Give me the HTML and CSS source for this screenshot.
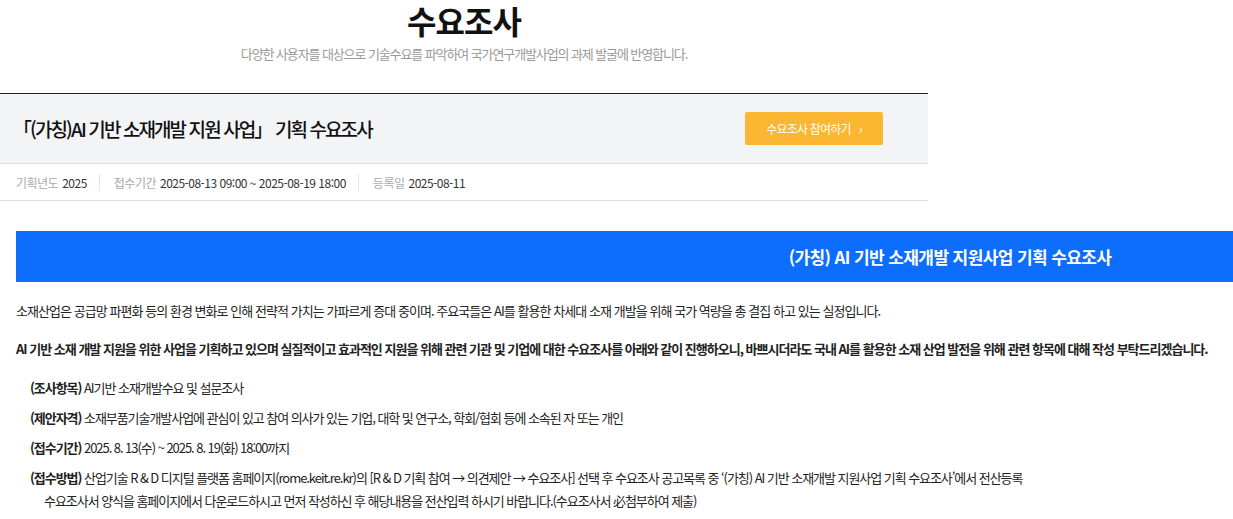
FILE: index.html
```html
<!DOCTYPE html>
<html lang="ko">
<head>
  <meta charset="UTF-8" />
  <title>수요조사</title>
  <link rel="stylesheet" href="styles.css">
</head>
<body>
  <div class="topo">
    <h1 class="titulo">수요조사</h1>
    <p class="subtitulo">다양한 사용자를 대상으로 기술수요를 파악하여 국가연구개발사업의 과제 발굴에 반영합니다.</p>

    <div class="caixa">
      <h2>「(가칭)AI 기반 소재개발 지원 사업」 기획 수요조사</h2>
      <a class="btn-participar" href="#">수요조사 참여하기 <span class="seta">›</span></a>
    </div>

    <div class="meta">
      <div class="meta-item"><span class="rotulo">기획년도</span> 2025</div>
      <div class="meta-item"><span class="rotulo">접수기간</span> 2025-08-13 09:00 ~ 2025-08-19 18:00</div>
      <div class="meta-item"><span class="rotulo">등록일</span> 2025-08-11</div>
    </div>
  </div>

  <div class="conteudo">
    <div class="faixa">(가칭) AI 기반 소재개발 지원사업 기획 수요조사</div>

    <p class="texto">소재산업은 공급망 파편화 등의 환경 변화로 인해 전략적 가치는 가파르게 증대 중이며. 주요국들은 AI를 활용한 차세대 소재 개발을 위해 국가 역량을 총 결집 하고 있는 실정입니다.</p>
    <p class="texto forte">AI 기반 소재 개발 지원을 위한 사업을 기획하고 있으며 실질적이고 효과적인 지원을 위해 관련 기관 및 기업에 대한 수요조사를 아래와 같이 진행하오니, 바쁘시더라도 국내 AI를 활용한 소재 산업 발전을 위해 관련 항목에 대해 작성 부탁드리겠습니다.</p>

    <ul class="itens">
      <li><b>(조사항목)</b> AI기반 소재개발수요 및 설문조사</li>
      <li><b>(제안자격)</b> 소재부품기술개발사업에 관심이 있고 참여 의사가 있는 기업, 대학 및 연구소, 학회/협회 등에 소속된 자 또는 개인</li>
      <li><b>(접수기간)</b> 2025. 8. 13(수) ~ 2025. 8. 19(화) 18:00까지</li>
      <li><b>(접수방법)</b> 산업기술 R &amp; D 디지털 플랫폼 홈페이지(rome.keit.re.kr)의 [R &amp; D 기획 참여 → 의견제안 → 수요조사] 선택 후 수요조사 공고목록 중 ‘(가칭) AI 기반 소재개발 지원사업 기획 수요조사’에서 전산등록
        <span class="continua">수요조사서 양식을 홈페이지에서 다운로드하시고 먼저 작성하신 후 해당내용을 전산입력 하시기 바랍니다.(수요조사서 必첨부하여 제출)</span>
      </li>
    </ul>
  </div>
</body>
</html>
```

FILE: styles.css
```css
* {
  box-sizing: border-box;
}
html, body {
  overflow: hidden;
}
body {
  margin: 0;
  font-family: 'Noto Sans CJK KR', 'Noto Sans', sans-serif;
  color: #222;
  background: #fff;
}

/* Topo */
.topo {
  width: 928px;
}
.titulo {
  margin: 0;
  padding-top: 2px;
  height: 40px;
  line-height: 36px;
  font-size: 32px;
  font-weight: 700;
  text-align: center;
  color: #111;
  letter-spacing: -1px;
}
.subtitulo {
  margin: 4px 0 0;
  line-height: 20px;
  font-size: 13px;
  color: #999;
  text-align: center;
  letter-spacing: -1.1px;
}

.caixa {
  margin-top: 29px;
  height: 71px;
  border-top: 1px solid #222;
  border-bottom: 1px solid #ddd;
  background: #f3f4f6;
  display: flex;
  align-items: center;
  justify-content: space-between;
  padding: 0 45px 0 13px;
}
.caixa h2 {
  margin: 0;
  font-size: 19px;
  font-weight: 500;
  letter-spacing: -1.9px;
  color: #111;
}
.btn-participar {
  display: flex;
  align-items: center;
  justify-content: center;
  gap: 6px;
  width: 138px;
  height: 33px;
  background: #fbb731;
  color: #fff;
  font-size: 12px;
  text-decoration: none;
  border-radius: 2px;
  letter-spacing: -0.8px;
}
.btn-participar .seta {
  font-size: 13px;
  margin-left: 2px;
}

.meta {
  display: flex;
  align-items: center;
  height: 37px;
  padding-left: 16px;
  border-bottom: 1px solid #ddd;
  font-size: 12px;
  color: #333;
}
.meta-item {
  display: flex;
  align-items: center;
  gap: 4px;
  letter-spacing: -0.5px;
}
.meta-item + .meta-item {
  margin-left: 12px;
  padding-left: 14px;
  border-left: 1px solid #e5e5e5;
}
.rotulo {
  color: #aaa;
}

/* Conteudo */
.conteudo {
  width: 1884px;
  padding-left: 16px;
}
.faixa {
  margin-top: 30px;
  height: 51px;
  background: #0d6efd;
  color: #fff;
  font-size: 17px;
  font-weight: 700;
  display: flex;
  align-items: center;
  justify-content: center;
  letter-spacing: -0.6px;
}
.texto {
  margin: 19px 0 0;
  font-size: 13px;
  line-height: 20px;
  letter-spacing: -0.95px;
}
.forte {
  margin-top: 18px;
  font-weight: 700;
  letter-spacing: -1px;
}

.itens {
  list-style: none;
  margin: 19px 0 0;
  padding-left: 14px;
  font-size: 13px;
  letter-spacing: -1.05px;
}
.itens li {
  line-height: 20px;
  margin-bottom: 10px;
}
.itens b {
  font-weight: 700;
}
.continua {
  display: block;
  padding-left: 14px;
  margin-top: 3px;
}
```
